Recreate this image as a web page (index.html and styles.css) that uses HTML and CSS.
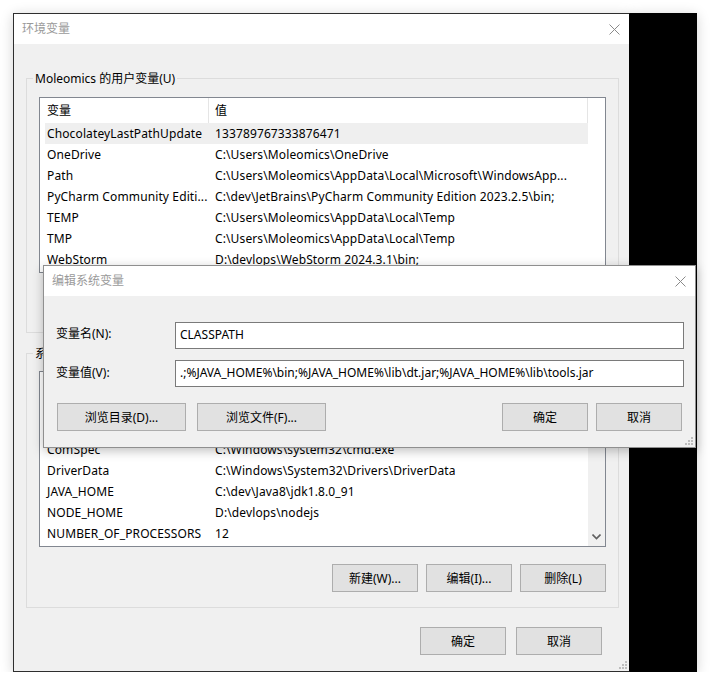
FILE: index.html
```html
<!DOCTYPE html>
<html lang="zh-CN">
<head>
<meta charset="utf-8">
<title>环境变量</title>
<link rel="stylesheet" href="styles.css">
</head>
<body>
<div class="stage">
  <div class="window">
    <div class="titlebar">
      <span class="title">环境变量</span>
      <svg class="close" width="11" height="11" viewBox="0 0 11 11"><path d="M0.5 0.5 L10.5 10.5 M10.5 0.5 L0.5 10.5" stroke="#8a8a8a" stroke-width="1" fill="none"/></svg>
    </div>
    <div class="body">
      <div class="group group-user">
        <div class="group-label">Moleomics 的用户变量(U)</div>
        <div class="list">
          <div class="list-main">
            <div class="list-head"><div class="hc1">变量</div><div class="hc2">值</div></div>
            <div class="row sel"><div class="c1">ChocolateyLastPathUpdate</div><div class="c2">133789767333876471</div></div>
            <div class="row"><div class="c1">OneDrive</div><div class="c2">C:\Users\Moleomics\OneDrive</div></div>
            <div class="row"><div class="c1">Path</div><div class="c2">C:\Users\Moleomics\AppData\Local\Microsoft\WindowsApp...</div></div>
            <div class="row"><div class="c1">PyCharm Community Editi...</div><div class="c2">C:\dev\JetBrains\PyCharm Community Edition 2023.2.5\bin;</div></div>
            <div class="row"><div class="c1">TEMP</div><div class="c2">C:\Users\Moleomics\AppData\Local\Temp</div></div>
            <div class="row"><div class="c1">TMP</div><div class="c2">C:\Users\Moleomics\AppData\Local\Temp</div></div>
            <div class="row"><div class="c1">WebStorm</div><div class="c2">D:\devlops\WebStorm 2024.3.1\bin;</div></div>
          </div>
          <div class="list-side"></div>
        </div>
        <div class="btn-row">
          <div class="btn">新建(N)...</div>
          <div class="btn">编辑(E)...</div>
          <div class="btn">删除(D)</div>
        </div>
      </div>

      <div class="group group-sys">
        <div class="group-label">系统变量(S)</div>
        <div class="list">
          <div class="list-main">
            <div class="list-head"><div class="hc1">变量</div><div class="hc2">值</div></div>
            <div class="row"><div class="c1">CLASSPATH</div><div class="c2">.;%JAVA_HOME%\bin;%JAVA_HOME%\lib\dt.jar;%JAVA_HOME%\lib...</div></div>
            <div class="row"><div class="c1">ChocolateyInstall</div><div class="c2">C:\ProgramData\chocolatey</div></div>
            <div class="row"><div class="c1">ComSpec</div><div class="c2">C:\Windows\system32\cmd.exe</div></div>
            <div class="row"><div class="c1">DriverData</div><div class="c2">C:\Windows\System32\Drivers\DriverData</div></div>
            <div class="row"><div class="c1">JAVA_HOME</div><div class="c2">C:\dev\Java8\jdk1.8.0_91</div></div>
            <div class="row"><div class="c1">NODE_HOME</div><div class="c2">D:\devlops\nodejs</div></div>
            <div class="row"><div class="c1">NUMBER_OF_PROCESSORS</div><div class="c2">12</div></div>
          </div>
          <div class="list-side scrollbar">
            <svg class="chev" width="9" height="6" viewBox="0 0 9 6"><path d="M0.5 0.5 L4.5 4.5 L8.5 0.5" stroke="#606060" stroke-width="1.6" fill="none"/></svg>
          </div>
        </div>
        <div class="btn-row">
          <div class="btn">新建(W)...</div>
          <div class="btn">编辑(I)...</div>
          <div class="btn">删除(L)</div>
        </div>
      </div>

      <div class="footer">
        <div class="btn">确定</div>
        <div class="btn">取消</div>
      </div>
    </div>
    <svg class="grip grip-main" width="8" height="8" viewBox="0 0 8 8"><rect x="6" y="0" width="2" height="2"/><rect x="3" y="3" width="2" height="2"/><rect x="6" y="3" width="2" height="2"/><rect x="0" y="6" width="2" height="2"/><rect x="3" y="6" width="2" height="2"/><rect x="6" y="6" width="2" height="2"/></svg>

    <div class="dialog">
      <div class="titlebar dlg-titlebar">
        <span class="title">编辑系统变量</span>
        <svg class="close" width="11" height="11" viewBox="0 0 11 11"><path d="M0.5 0.5 L10.5 10.5 M10.5 0.5 L0.5 10.5" stroke="#8a8a8a" stroke-width="1" fill="none"/></svg>
      </div>
      <div class="dlg-body">
        <div class="field">
          <div class="field-label">变量名(N):</div>
          <div class="input">CLASSPATH</div>
        </div>
        <div class="field">
          <div class="field-label">变量值(V):</div>
          <div class="input">.;%JAVA_HOME%\bin;%JAVA_HOME%\lib\dt.jar;%JAVA_HOME%\lib\tools.jar</div>
        </div>
        <div class="dlg-buttons">
          <div class="btn wide">浏览目录(D)...</div>
          <div class="btn wide">浏览文件(F)...</div>
          <div class="spacer"></div>
          <div class="btn">确定</div>
          <div class="btn">取消</div>
        </div>
      </div>
      <svg class="grip grip-dlg" width="8" height="8" viewBox="0 0 8 8"><rect x="6" y="0" width="2" height="2"/><rect x="3" y="3" width="2" height="2"/><rect x="6" y="3" width="2" height="2"/><rect x="0" y="6" width="2" height="2"/><rect x="3" y="6" width="2" height="2"/><rect x="6" y="6" width="2" height="2"/></svg>
    </div>
  </div>
  <div class="black-panel"></div>
</div>
</body>
</html>
```

FILE: styles.css
```css
* { box-sizing: border-box; }
html, body {
  margin: 0;
  padding: 0;
  background: #ffffff;
}
body {
  font-family: "Noto Sans", "Noto Sans CJK SC", sans-serif;
  font-size: 12px;
  color: #000;
}
.stage {
  display: flex;
  padding: 13px 0 0 13px;
}
.window {
  position: relative;
  width: 617px;
  height: 659px;
  border: 1px solid #2e2e2e;
  border-right-color: #000;
  background: #f0f0f0;
  display: flex;
  flex-direction: column;
  box-shadow: 0 2px 12px rgba(0,0,0,0.18);
}
.black-panel {
  width: 67px;
  height: 659px;
  background: #000;
  box-shadow: 0 2px 12px rgba(0,0,0,0.18);
}
.titlebar {
  height: 30px;
  background: #fff;
  display: flex;
  align-items: center;
  justify-content: space-between;
  padding: 0 9px 0 8px;
  flex: none;
}
.title {
  color: #9a9a9a;
  line-height: 16px;
}
.close { display: block; }
.body {
  flex: 1;
  padding: 34px 10px 0 12px;
  display: flex;
  flex-direction: column;
}
.group {
  border: 1px solid #dcdcdc;
  display: flex;
  flex-direction: column;
  padding: 0 12px;
}
.group-label {
  align-self: flex-start;
  margin: -8px 0 0 -6px;
  padding: 0 2px;
  background: #f0f0f0;
  line-height: 16px;
  height: 16px;
  white-space: nowrap;
}
.group-user { padding-bottom: 15px; }
.group-sys { margin-top: 20px; padding-bottom: 15px; }
.list {
  margin-top: 10px;
  height: 176px;
  border: 1px solid #828790;
  background: #fff;
  display: flex;
  overflow: hidden;
}
.group-sys .list { margin-top: 9px; }
.list-main {
  width: 548px;
  display: flex;
  flex-direction: column;
  letter-spacing: 0.12px;
}
.list-side {
  width: 17px;
  background: #fff;
}
.list-side.scrollbar {
  background: #f0f0f0;
  display: flex;
  align-items: flex-end;
  justify-content: center;
  padding-bottom: 6px;
}
.chev { display: block; }
.list-head {
  display: flex;
  height: 25px;
  line-height: 26px;
  flex: none;
}
.hc1 {
  width: 169px;
  padding-left: 7px;
  border-right: 1px solid #e5e5e5;
}
.hc2 {
  width: 379px;
  padding-left: 6px;
  border-right: 1px solid #e5e5e5;
}
.row {
  display: flex;
  height: 21px;
  line-height: 21px;
  margin-left: 5px;
  width: 543px;
  flex: none;
  white-space: nowrap;
}
.row.sel { background: #efefef; }
.c1 {
  width: 163px;
  padding-left: 2px;
  overflow: hidden;
}
.c2 {
  width: 380px;
  padding-left: 7px;
  overflow: hidden;
}
.btn-row {
  display: flex;
  justify-content: flex-end;
  gap: 8px;
  margin-top: 17px;
}
.group-user .btn-row { margin-top: 16px; }
.btn {
  width: 86px;
  height: 28px;
  border: 1px solid #adadad;
  background: #e1e1e1;
  display: flex;
  align-items: center;
  justify-content: center;
  white-space: nowrap;
}
.footer {
  display: flex;
  justify-content: flex-end;
  gap: 10px;
  margin-top: 19px;
  padding-right: 17px;
}
.grip {
  position: absolute;
  fill: #bdbdbd;
}
.grip-main { right: 2px; bottom: 2px; }

.dialog {
  position: absolute;
  left: 29px;
  top: 251px;
  width: 653px;
  height: 183px;
  border: 1px solid #8f8f8f;
  background: #f0f0f0;
  box-shadow: 0 3px 10px rgba(0,0,0,0.25);
  display: flex;
  flex-direction: column;
  z-index: 5;
}
.dlg-titlebar { padding: 0 9px 0 8px; }
.dlg-body {
  padding: 26px 11px 0 12px;
  display: flex;
  flex-direction: column;
  gap: 11px;
}
.field {
  display: flex;
  align-items: center;
}
.field-label {
  width: 119px;
  flex: none;
  line-height: 16px;
  margin-top: -3px;
}
.field + .field .field-label { margin-top: -1px; }
.input {
  width: 509px;
  height: 27px;
  border: 1px solid #7a7a7a;
  background: #fff;
  padding-left: 4px;
  line-height: 23px;
  white-space: nowrap;
  overflow: hidden;
}
.dlg-buttons {
  display: flex;
  margin-top: 5px;
  padding-left: 1px;
  padding-right: 2px;
  gap: 8px;
}
.dlg-buttons .btn.wide { width: 129px; margin-right: 3px; }
.dlg-buttons .spacer { flex: 1; }
.grip-dlg { right: 2px; bottom: 2px; }
```
